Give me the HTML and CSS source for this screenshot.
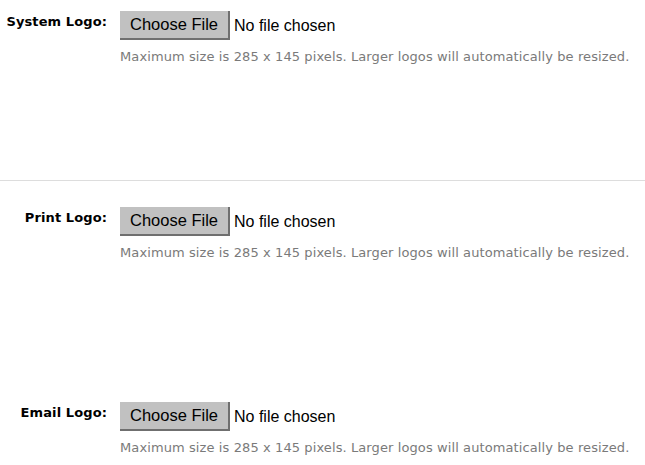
FILE: index.html
```html
<!DOCTYPE html>
<html lang="en">
<head>
    <meta charset="UTF-8">
    <meta name="viewport" content="width=device-width, initial-scale=1.0">
    <title>Logo Settings</title>
    <link rel="stylesheet" href="styles.css">
</head>
<body>
    <div class="logo-settings">
        <div class="field first">
            <div class="field-label">System Logo:</div>
            <div class="field-body">
                <div class="file-picker">
                    <button type="button" class="choose-btn">Choose File</button>
                    <span class="file-name">No file chosen</span>
                </div>
                <p class="help">Maximum size is 285 x 145 pixels. Larger logos will automatically be resized.</p>
            </div>
        </div>

        <div class="field">
            <div class="field-label">Print Logo:</div>
            <div class="field-body">
                <div class="file-picker">
                    <button type="button" class="choose-btn">Choose File</button>
                    <span class="file-name">No file chosen</span>
                </div>
                <p class="help">Maximum size is 285 x 145 pixels. Larger logos will automatically be resized.</p>
            </div>
        </div>

        <div class="field">
            <div class="field-label">Email Logo:</div>
            <div class="field-body">
                <div class="file-picker">
                    <button type="button" class="choose-btn">Choose File</button>
                    <span class="file-name">No file chosen</span>
                </div>
                <p class="help">Maximum size is 285 x 145 pixels. Larger logos will automatically be resized.</p>
            </div>
        </div>
    </div>
</body>
</html>
```

FILE: styles.css
```css
* {
    margin: 0;
    padding: 0;
    box-sizing: border-box;
}

body {
    font-family: 'DejaVu Sans', sans-serif;
    background: white;
    color: #000;
}

.field {
    display: grid;
    grid-template-columns: 108px 1fr;
    column-gap: 12px;
    align-items: start;
    height: 195px;
    padding-top: 26px;
}

.field.first {
    height: 181px;
    padding-top: 11px;
    border-bottom: 1px solid #dddddd;
}

.field:last-child {
    height: auto;
}

.field-label {
    text-align: right;
    font-weight: bold;
    font-size: 13px;
    letter-spacing: 0.1px;
    line-height: 20px;
    padding-top: 1px;
    padding-right: 1px;
}

.file-picker {
    display: flex;
    align-items: center;
    gap: 4px;
}

.choose-btn {
    font-family: 'Liberation Sans', Arial, sans-serif;
    font-size: 16.5px;
    width: 110px;
    height: 29px;
    background: #c1c1c1;
    border: none;
    border-right: 2px solid #6f6f6f;
    border-bottom: 2px solid #6f6f6f;
    color: #000;
    cursor: pointer;
}

.file-name {
    font-family: 'Liberation Sans', Arial, sans-serif;
    font-size: 16px;
}

.help {
    margin-top: 9px;
    font-family: 'DejaVu Sans', sans-serif;
    font-size: 13px;
    letter-spacing: 0.1px;
    color: #7a7a7a;
}
```
